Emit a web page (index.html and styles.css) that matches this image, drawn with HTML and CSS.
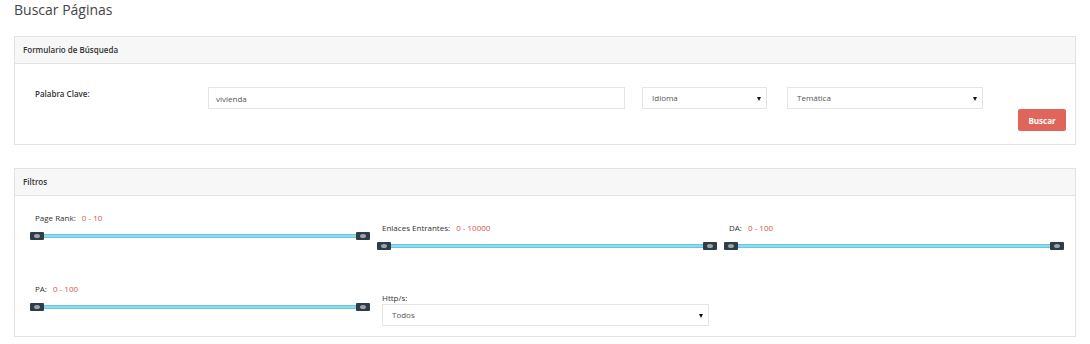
FILE: index.html
```html
<!DOCTYPE html>
<html lang="es">
<head>
    <meta charset="UTF-8">
    <title>Buscar Páginas</title>
    <link rel="stylesheet" href="styles.css">
</head>
<body>
    <h1 class="page-title">Buscar Páginas</h1>

    <div class="panel">
        <div class="panel-heading">Formulario de Búsqueda</div>
        <div class="panel-body search-row">
            <label class="field-label">Palabra Clave:</label>
            <input class="text-input" type="text" value="vivienda">
            <span class="select-box idioma">Idioma</span>
            <span class="select-box tematica">Temática</span>
            <button class="btn-buscar">Buscar</button>
        </div>
    </div>

    <div class="panel filters">
        <div class="panel-heading">Filtros</div>
        <div class="panel-body filter-grid">
            <div class="filter">
                <div class="filter-label">Page Rank: <span class="range">0 - 10</span></div>
                <div class="slider"><span class="handle left"></span><span class="handle right"></span></div>
            </div>
            <div class="filter shifted">
                <div class="filter-label">Enlaces Entrantes: <span class="range">0 - 10000</span></div>
                <div class="slider"><span class="handle left"></span><span class="handle right"></span></div>
            </div>
            <div class="filter shifted">
                <div class="filter-label">DA: <span class="range">0 - 100</span></div>
                <div class="slider"><span class="handle left"></span><span class="handle right"></span></div>
            </div>
            <div class="filter">
                <div class="filter-label">PA: <span class="range">0 - 100</span></div>
                <div class="slider"><span class="handle left"></span><span class="handle right"></span></div>
            </div>
            <div class="filter shifted-sm">
                <div class="filter-label">Http/s:</div>
                <span class="select-box http">Todos</span>
            </div>
        </div>
    </div>
</body>
</html>
```

FILE: styles.css
```css
* {
    margin: 0;
    padding: 0;
    box-sizing: border-box;
}

body {
    font-family: "Open Sans", Arial, sans-serif;
    background: #fff;
    color: #333;
    padding: 0 14px;
    font-size: 8px;
}

.page-title {
    font-size: 14px;
    font-weight: 400;
    color: #444;
    line-height: 20px;
    height: 36px;
}

.panel {
    border: 1px solid #e3e3e3;
    background: #fff;
}

.filters {
    margin-top: 23px;
}

.panel-heading {
    background: #f7f7f7;
    border-bottom: 1px solid #e3e3e3;
    height: 27px;
    line-height: 26px;
    padding-left: 8px;
    font-weight: 600;
    font-size: 8px;
    color: #333;
}

/* search form row */
.search-row {
    display: flex;
    align-items: flex-start;
    padding: 23px 9px 13px 20px;
}

.field-label {
    width: 173px;
    font-weight: 600;
    line-height: 11px;
    padding-top: 1px;
}

.text-input {
    width: 417px;
    height: 22px;
    border: 1px solid #e5e5e5;
    padding: 0 7px;
    font-family: inherit;
    font-size: 8px;
    color: #555;
    outline: none;
}

.select-box {
    position: relative;
    display: block;
    height: 22px;
    line-height: 20px;
    border: 1px solid #e5e5e5;
    padding: 0 9px;
    color: #555;
    font-size: 8px;
}

.select-box::after {
    content: "";
    position: absolute;
    top: 9px;
    right: 5px;
    border-left: 2px solid transparent;
    border-right: 2px solid transparent;
    border-top: 4px solid #111;
}

.idioma {
    width: 125px;
    margin-left: 17px;
}

.tematica {
    width: 196px;
    margin-left: 20px;
}

.btn-buscar {
    margin-left: auto;
    margin-top: 22px;
    width: 48px;
    height: 22px;
    border: none;
    border-radius: 2px;
    background: #e0665c;
    color: #fff;
    font-family: inherit;
    font-weight: 700;
    font-size: 8px;
}

/* filters */
.filter-grid {
    display: grid;
    grid-template-columns: repeat(3, 340px);
    column-gap: 7px;
    row-gap: 33px;
    padding: 16px 11px 10px 15px;
}

.shifted {
    padding-top: 10px;
}

.shifted-sm {
    padding-top: 9px;
}

.filter-label {
    line-height: 11px;
    padding-left: 5px;
    color: #333;
}

.range {
    color: #d2554c;
    margin-left: 4px;
}

.slider {
    position: relative;
    height: 8px;
    margin-top: 9px;
}

.slider::before {
    content: "";
    position: absolute;
    left: 7px;
    right: 7px;
    top: 2px;
    height: 4px;
    background: linear-gradient(#4fbfdd, #a9e2f1 50%, #4fbfdd);
}

.handle {
    position: absolute;
    top: 0;
    width: 14px;
    height: 8px;
    background: #2e3d47;
    border-radius: 1px;
}

.handle::after {
    content: "";
    position: absolute;
    left: 4px;
    top: 2px;
    width: 6px;
    height: 4px;
    border-radius: 50%;
    background: #9aa4aa;
}

.handle.left {
    left: 0;
}

.handle.right {
    right: 0;
}

.http {
    width: 327px;
    margin-top: 1px;
    margin-left: 5px;
}
```
